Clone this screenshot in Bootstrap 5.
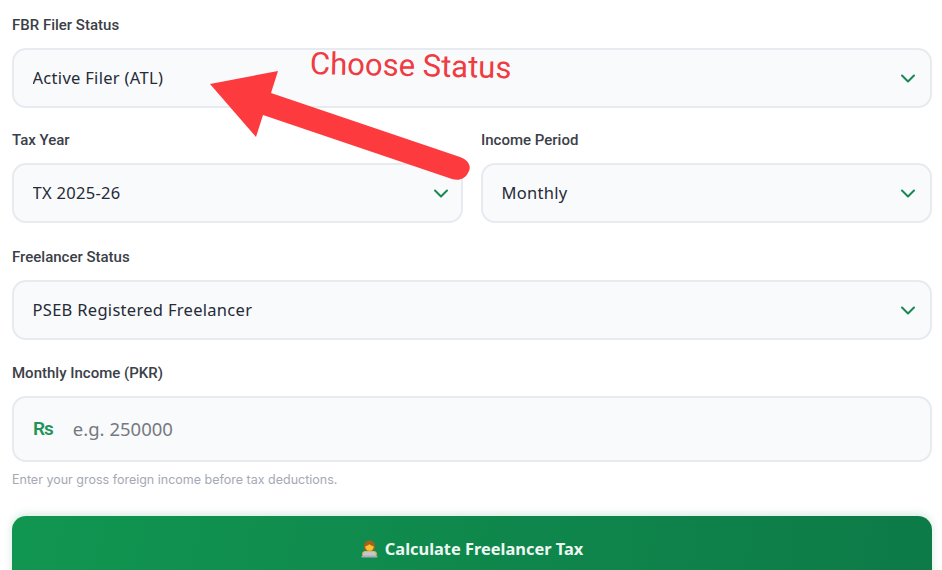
<!DOCTYPE html>
<html lang="en">
<head>
<meta charset="utf-8">
<title>Freelancer Tax</title>
<link href="https://cdn.jsdelivr.net/npm/bootstrap@5.3.0/dist/css/bootstrap.min.css" rel="stylesheet">
<style>
html,body{height:570px;overflow:hidden;background:#fff}
.calc-form{position:relative;padding:16px 10px 0 12px;height:570px;overflow:hidden;font-family:Inter,"Liberation Sans",sans-serif}
.field-label{display:block;font-family:Roboto,"Liberation Sans",sans-serif;font-size:15px;font-weight:500;line-height:18px;color:#3b4048;margin:0 0 14px}
.field-select{height:60px;border:2px solid #e7eaef;border-radius:14px;background-color:#f9fafc;color:#262b36;font-family:"Noto Sans","Open Sans",sans-serif;font-size:16.500px;font-weight:400;letter-spacing:.3px;padding:0 40px 0 18.500px;background-size:16px 12px;background-position:right 14px center;background-image:url("data:image/svg+xml,%3Csvg xmlns='http://www.w3.org/2000/svg' viewBox='0 0 16 12'%3E%3Cpath d='M2 3.500l6 6 6-6' fill='none' stroke='%23198754' stroke-width='2' stroke-linecap='round' stroke-linejoin='round'/%3E%3C/svg%3E")}
.chevron-near{background-position:right 12px center}
.field-gap{margin-bottom:23px}
.gap-wide{margin-bottom:25px}
.gap-wider{margin-bottom:24px}
.split-row{--bs-gutter-x:18px}
.money-group{height:66px;border:2px solid #e7eaef;border-radius:14px;background:#f9fafc;overflow:hidden}
.money-group .input-group-text{background:transparent;border:0;color:#23935a;font-family:Roboto,"Liberation Sans",sans-serif;font-size:19px;font-weight:600;padding:0 0 0 19px;letter-spacing:-1px}
.money-group .form-control{background:transparent;border:0;box-shadow:none;font-family:"Noto Sans","Open Sans",sans-serif;font-size:18.500px;padding:0 0 0 21px;color:#262b36}
.money-group .form-control::placeholder{color:#76797f;opacity:1}
.hint-text{font-size:12.500px;line-height:16px;color:#a5a9b3;margin:10px 0 28px}
.calc-btn{width:100%;height:70px;border:0;border-radius:14px 14px 0 0;padding:0 0 4px;background:linear-gradient(100deg,#119651,#0d7a47);color:#eef8f2;font-family:"Noto Sans","Open Sans",sans-serif;font-size:16.400px;font-weight:700;box-shadow:0 -2px 8px rgba(25,135,84,.18);gap:7px}
.calc-icon{width:17px;height:18px}
.note-text{position:absolute;left:310px;top:44px;color:#ef3b41;font-family:Roboto,"Liberation Sans",sans-serif;font-size:31px;line-height:40px;transform:rotate(1.200deg);transform-origin:left center;white-space:nowrap}
.note-arrow{position:absolute;left:0;top:0;pointer-events:none}
</style>
</head>
<body>
<form class="calc-form">
  <div class="field-gap">
    <label class="field-label" for="filer">FBR Filer Status</label>
    <select id="filer" class="form-select field-select"><option>Active Filer (ATL)</option></select>
  </div>
  <div class="row split-row gap-wide">
    <div class="col-6">
      <label class="field-label" for="year">Tax Year</label>
      <select id="year" class="form-select field-select chevron-near"><option>TX 2025-26</option></select>
    </div>
    <div class="col-6">
      <label class="field-label" for="period">Income Period</label>
      <select id="period" class="form-select field-select"><option>Monthly</option></select>
    </div>
  </div>
  <div class="gap-wider">
    <label class="field-label" for="free">Freelancer Status</label>
    <select id="free" class="form-select field-select"><option>PSEB Registered Freelancer</option></select>
  </div>
  <div>
    <label class="field-label" for="income">Monthly Income (PKR)</label>
    <div class="input-group money-group align-items-center">
      <span class="input-group-text">Rs</span>
      <input id="income" type="text" class="form-control" placeholder="e.g. 250000">
    </div>
    <p class="hint-text">Enter your gross foreign income before tax deductions.</p>
  </div>
  <button type="button" class="btn calc-btn d-flex align-items-center justify-content-center">
    <svg class="calc-icon" viewBox="0 0 17 18" aria-hidden="true">
      <path d="M3 8C3 2.800 5 .6 8.500.6S14 2.800 14 8l-1 2H4z" fill="#a5601c"/>
      <circle cx="8.500" cy="6.800" r="4.200" fill="#fbc02d"/>
      <path d="M4.200 6.300c1.500-.2 3-1 4.300-2.300 1 1.300 2.700 2.100 4.300 2.300l.4-1.800C12.500 2.200 10.500 1.100 8.500 1.100S4.500 2.200 3.800 4.500z" fill="#a5601c"/>
      <path d="M1 15v-1.500C1 11.500 4 10.500 8.500 10.500s7.500 1 7.500 3V15z" fill="#ed9f2d"/>
      <path d="M2.800 11.600h11.400l1 4.400H1.800z" fill="#c4c8cc"/>
      <rect x=".5" y="15.500" width="16" height="2" rx=".7" fill="#a9aeb4"/>
    </svg>
    <span>Calculate Freelancer Tax</span>
  </button>
  <svg class="note-arrow" width="942" height="570" viewBox="0 0 942 570" aria-hidden="true">
    <path d="M210 84L278 71L271 93L460 157C469 160 472 167 468 173C465 179 459 181 452 179L263 115L256 137Z" fill="#fd3b3e"/>
  </svg>
  <div class="note-text">Choose Status</div>
</form>
<script src="https://cdn.jsdelivr.net/npm/bootstrap@5.3.0/dist/js/bootstrap.bundle.min.js"></script>
</body>
</html>
